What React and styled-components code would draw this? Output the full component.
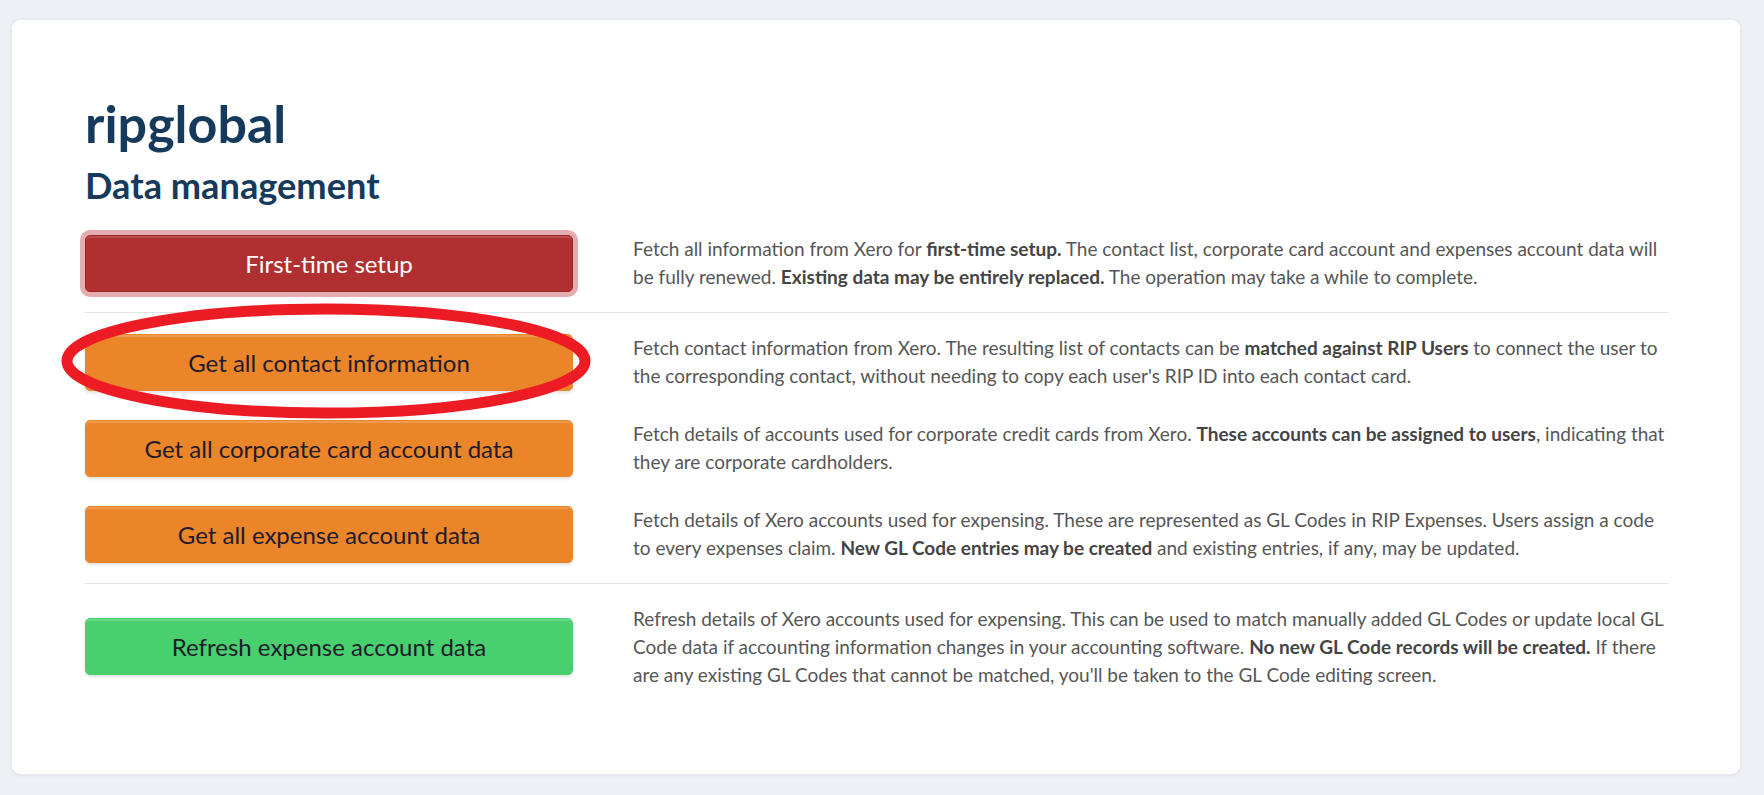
import React from "react";
import styled, { createGlobalStyle, css } from "styled-components";

const GlobalStyle = createGlobalStyle`
  html, body {
    margin: 0;
    padding: 0;
    background: #eef0f5;
    font-family: Lato, "Open Sans", sans-serif;
  }
`;

const Page = styled.div`
  padding: 20px 24px 20px 12px;
`;

const Card = styled.div`
  position: relative;
  background: #ffffff;
  border-radius: 9px;
  box-shadow: 0 1px 6px rgba(40, 50, 80, 0.08);
  padding: 72px 71px 71px 73px;
`;

const Title = styled.h1`
  margin: 0;
  font-size: 52px;
  line-height: 1.2;
  font-weight: 700;
  color: #163a5c;
`;

const Subtitle = styled.h2`
  margin: 11px 0 13px;
  font-size: 36.2px;
  line-height: 1.15;
  font-weight: 700;
  color: #163a5c;
`;

const Row = styled.div`
  display: grid;
  grid-template-columns: 488px 1fr;
  column-gap: 60px;
  align-items: center;
  padding: 14.5px 0;
`;

const Divider = styled.hr`
  border: none;
  border-top: 1px solid #e1e3e7;
  margin: 6px 0 6px;
`;

const palette = {
  danger: css`
    background: #b03032;
    color: #ffffff;
    border: 1px solid #9a2628;
    box-shadow: 0 0 0 5px rgba(190, 60, 64, 0.42), inset 0 2px 0 rgba(255, 255, 255, 0.12);
  `,
  warning: css`
    background: #eb8529;
    color: #1f1b2c;
    border: 1px solid #eb8529;
    box-shadow: 0 2px 3px rgba(0, 0, 0, 0.12), inset 0 2px 0 rgba(255, 255, 255, 0.18);
  `,
  success: css`
    background: #48cf6e;
    color: #1f1b2c;
    border: 1px solid #48cf6e;
    box-shadow: 0 2px 3px rgba(0, 0, 0, 0.12), inset 0 2px 0 rgba(255, 255, 255, 0.2);
  `,
};

const ActionButton = styled.button`
  width: 488px;
  height: 57px;
  border-radius: 5px;
  font-family: Lato, "Open Sans", sans-serif;
  font-size: 24px;
  font-weight: 400;
  cursor: pointer;
  ${(p) => palette[p.$variant]}
`;

const Description = styled.p`
  margin: 0;
  font-size: 19px;
  line-height: 28px;
  color: #565656;

  b {
    font-weight: 700;
    color: #444444;
  }
`;

const Mark = styled.svg`
  position: absolute;
  left: 30px;
  top: 277px;
  pointer-events: none;
`;

const App = () => {
  return (
    <Page>
      <GlobalStyle />
      <Card>
        <Title>ripglobal</Title>
        <Subtitle>Data management</Subtitle>

        <Row>
          <ActionButton $variant="danger">First-time setup</ActionButton>
          <Description>
            Fetch all information from Xero for <b>first-time setup.</b> The
            contact list, corporate card account and expenses account data will
            be fully renewed. <b>Existing data may be entirely replaced.</b> The
            operation may take a while to complete.
          </Description>
        </Row>

        <Divider />

        <Row>
          <ActionButton $variant="warning">Get all contact information</ActionButton>
          <Description>
            Fetch contact information from Xero. The resulting list of contacts
            can be <b>matched against RIP Users</b> to connect the user to the
            corresponding contact, without needing to copy each user's RIP ID
            into each contact card.
          </Description>
        </Row>
        <Row>
          <ActionButton $variant="warning">Get all corporate card account data</ActionButton>
          <Description>
            Fetch details of accounts used for corporate credit cards from Xero.{" "}
            <b>These accounts can be assigned to users</b>, indicating that they
            are corporate cardholders.
          </Description>
        </Row>
        <Row>
          <ActionButton $variant="warning">Get all expense account data</ActionButton>
          <Description>
            Fetch details of Xero accounts used for expensing. These are
            represented as GL Codes in RIP Expenses. Users assign a code to every
            expenses claim. <b>New GL Code entries may be created</b> and existing
            entries, if any, may be updated.
          </Description>
        </Row>

        <Divider />

        <Row>
          <ActionButton $variant="success">Refresh expense account data</ActionButton>
          <Description>
            Refresh details of Xero accounts used for expensing. This can be used
            to match manually added GL Codes or update local GL Code data if
            accounting information changes in your accounting software.{" "}
            <b>No new GL Code records will be created.</b> If there are any
            existing GL Codes that cannot be matched, you'll be taken to the GL
            Code editing screen.
          </Description>
        </Row>

        <Mark width="560" height="134" viewBox="0 0 560 134">
          <ellipse
            cx="284"
            cy="64"
            rx="259"
            ry="52"
            fill="none"
            stroke="#ed1c24"
            strokeWidth="11"
          />
        </Mark>
      </Card>
    </Page>
  );
};

export default App;
